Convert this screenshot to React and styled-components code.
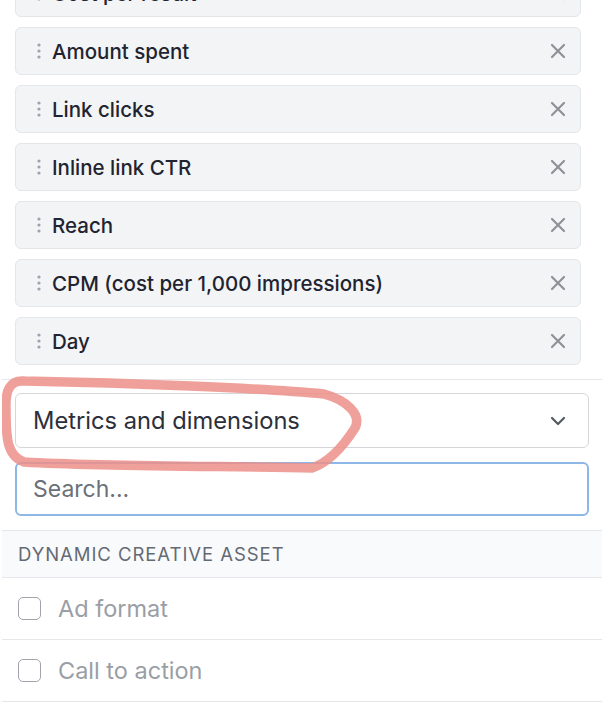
import styled, { createGlobalStyle } from 'styled-components';

const GlobalStyle = createGlobalStyle`
  html, body {
    margin: 0;
    padding: 0;
    background: #ffffff;
    font-family: Inter, "Noto Sans", "Liberation Sans", sans-serif;
    -webkit-font-smoothing: antialiased;
  }
  * { box-sizing: border-box; }
`;

const selectedFields = [
  'Cost per result',
  'Amount spent',
  'Link clicks',
  'Inline link CTR',
  'Reach',
  'CPM (cost per 1,000 impressions)',
  'Day',
];

const assetOptions = ['Ad format', 'Call to action'];

const DragDots = () => (
  <svg width="6" height="18" viewBox="0 0 6 18" aria-hidden="true">
    <circle cx="3" cy="3" r="1.6" fill="#9ca3af" />
    <circle cx="3" cy="9" r="1.6" fill="#9ca3af" />
    <circle cx="3" cy="15" r="1.6" fill="#9ca3af" />
  </svg>
);

const CloseIcon = () => (
  <svg width="16" height="16" viewBox="0 0 16 16" aria-hidden="true">
    <path d="M2 2 L14 14 M14 2 L2 14" stroke="#8e9297" strokeWidth="2.2" strokeLinecap="round" />
  </svg>
);

const Chevron = () => (
  <svg width="16" height="10" viewBox="0 0 16 10" aria-hidden="true">
    <path d="M2 2 L8 8 L14 2" fill="none" stroke="#555a60" strokeWidth="2.2" strokeLinecap="round" strokeLinejoin="round" />
  </svg>
);

const App = () => (
  <>
    <GlobalStyle />
    <Panel>
      <FieldList>
        {selectedFields.map((field) => (
          <FieldItem key={field}>
            <Handle><DragDots /></Handle>
            <FieldLabel>{field}</FieldLabel>
            <RemoveButton aria-label={`Remove ${field}`}><CloseIcon /></RemoveButton>
          </FieldItem>
        ))}
      </FieldList>

      <Controls>
        <SelectBox>
          <span>Metrics and dimensions</span>
          <Chevron />
        </SelectBox>
        <SearchInput placeholder="Search..." />
      </Controls>

      <GroupHeader>Dynamic creative asset</GroupHeader>
      {assetOptions.map((option) => (
        <OptionRow key={option}>
          <Checkbox />
          <OptionLabel>{option}</OptionLabel>
        </OptionRow>
      ))}

      {/* hand drawn highlight over the dropdown */}
      <Scribble width="602" height="720" viewBox="0 0 602 720" aria-hidden="true">
        <path
          d="M24 381 C 10 380, 5 390, 6 410 C 6 438, 7 456, 24 462 C 110 467, 240 466, 312 468 C 330 462, 346 442, 355 428 C 362 414, 346 400, 324 394 C 262 388, 130 383, 24 381"
          fill="none"
          stroke="#ec8f88"
          strokeOpacity="0.85"
          strokeWidth="9.5"
          strokeLinecap="round"
          strokeLinejoin="round"
        />
      </Scribble>
    </Panel>
  </>
);

const Panel = styled.div`
  position: relative;
  width: 600px;
  height: 720px;
  margin-left: 2px;
  overflow: hidden;
  background: #ffffff;
`;

// the list is scrolled: its first item sits partly above the top edge
const FieldList = styled.div`
  display: flex;
  flex-direction: column;
  gap: 10px;
  margin-top: -31px;
  padding: 0 21px 14px 13px;
  border-bottom: 1.5px solid #e5e7eb;
`;

const FieldItem = styled.div`
  display: flex;
  align-items: center;
  height: 48px;
  padding: 0 14px 0 20px;
  background: #f3f4f6;
  border: 1.5px solid #e4e6e9;
  border-radius: 6px;
`;

const Handle = styled.span`
  display: flex;
  align-items: center;
  width: 16px;
`;

const FieldLabel = styled.span`
  flex: 1;
  font-size: 20.5px;
  font-weight: 500;
  color: #1f2430;
`;

const RemoveButton = styled.button`
  display: flex;
  align-items: center;
  justify-content: center;
  padding: 0;
  border: none;
  background: none;
`;

const Controls = styled.div`
  display: flex;
  flex-direction: column;
  gap: 14px;
  padding: 13px 13px 14px 13px;
  border-bottom: 1.5px solid #e5e7eb;
`;

const SelectBox = styled.div`
  display: flex;
  align-items: center;
  justify-content: space-between;
  height: 55px;
  padding: 0 22px 0 17px;
  border: 1.5px solid #d4d6da;
  border-radius: 6px;
  font-size: 23.7px;
  color: #2b303a;
`;

const SearchInput = styled.input`
  height: 54px;
  padding: 0 16px;
  border: 2px solid #8db7e6;
  border-radius: 6px;
  font-family: inherit;
  font-size: 23px;
  color: #2b303a;
  outline: none;

  &::placeholder {
    color: #6b7079;
  }
`;

const GroupHeader = styled.div`
  display: flex;
  align-items: center;
  height: 47px;
  padding: 0 16px;
  background: #f9fafb;
  border-bottom: 1.5px solid #e5e7eb;
  font-size: 18.5px;
  text-transform: uppercase;
  letter-spacing: 0.95px;
  color: #646a73;
`;

const OptionRow = styled.div`
  display: flex;
  align-items: center;
  gap: 17px;
  height: 62px;
  padding: 0 16px;
  border-bottom: 1.5px solid #e5e7eb;
`;

const Checkbox = styled.span`
  width: 23px;
  height: 23px;
  border: 1.5px solid #a1a5ab;
  border-radius: 5px;
  background: #ffffff;
`;

const OptionLabel = styled.span`
  font-size: 23.5px;
  color: #9a9ea5;
`;

const Scribble = styled.svg`
  position: absolute;
  top: 0;
  left: -2px;
  pointer-events: none;
`;

export default App;
